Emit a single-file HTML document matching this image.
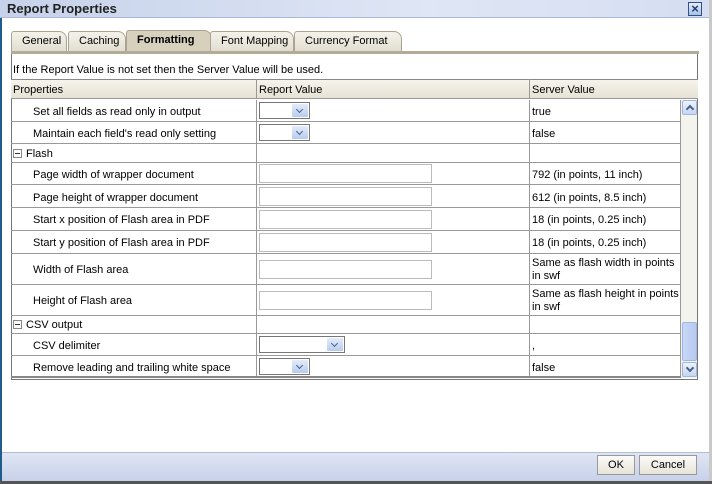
<!DOCTYPE html>
<html><head><style>
*{box-sizing:border-box;margin:0;padding:0}
body{width:712px;height:484px;overflow:hidden;background:#fff;font-family:"Liberation Sans",sans-serif;font-size:11px;color:#000;position:relative}
.a{position:absolute}
.t{white-space:nowrap}
.tab{position:absolute;top:31px;height:20px;background:linear-gradient(#f4f2ea,#e2ded0);border:1px solid #a8a491;border-bottom:none;border-radius:3px 8px 0 0;padding:3px 0 0 10px;font-size:11px}
.row{position:absolute;left:11px;width:670px;border-bottom:1px solid #999}
.row span{margin-top:1px}
.sel{position:absolute;height:17px;border:1px solid #777;background:#fff}
.sel i{position:absolute;right:1px;top:1px;width:16px;height:13px;background:linear-gradient(#e4ecfa,#b8cbee);border-radius:1px}
.sel i:after{content:"";position:absolute;left:5px;top:3px;width:4px;height:4px;border-right:1.5px solid #4a5f88;border-bottom:1.5px solid #4a5f88;transform:rotate(45deg)}
.inp{position:absolute;height:19px;border:1px solid #bbb;background:#fff}
.pm{display:inline-block;width:9px;height:9px;border:1px solid #888;position:relative;vertical-align:-1px;margin-right:4px}
.pm:after{content:"";position:absolute;left:1px;top:3px;width:5px;height:1px;background:#333}
.sb{position:absolute;left:682px;width:15px;height:15px;border:1px solid #9fb6e0;background:linear-gradient(#eef3fc,#c4d5f2);border-radius:2px}
.sb:after{content:"";position:absolute;left:4px;width:4px;height:4px;border-right:2px solid #4a5f88;border-bottom:2px solid #4a5f88}
.up:after{top:5px;transform:rotate(-135deg)}
.dn:after{top:2px;transform:rotate(45deg)}
</style></head><body>
<div class="a" style="left:0;top:0;width:712px;height:18px;background:linear-gradient(90deg,#c6d2ea,#dfe6f5 60%,#d5def2);border-bottom:1px solid #a9b8d8"></div>
<div class="a t" style="left:7px;top:1px;font-weight:bold;font-size:13px;color:#222">Report Properties</div>
<div class="a" style="left:688px;top:2px;width:14px;height:14px;border:1px solid #2f4f86;background:linear-gradient(#e7eefa,#a9bfe5);color:#1b3d74;font-size:13px;font-weight:bold;line-height:11px;text-align:center">×</div>
<div class="a" style="left:0;top:18px;width:2px;height:466px;background:#1f5c8c"></div>
<div class="a" style="left:709px;top:0;width:3px;height:484px;background:#c9c9c9"></div>

<div class="tab t" style="left:11px;width:56px">General</div>
<div class="tab t" style="left:68px;width:58px">Caching</div>
<div class="tab t" style="left:126px;width:86px;background:#d6d0bc;font-weight:bold;top:30px;height:22px">Formatting</div>
<div class="tab t" style="left:210px;width:84px">Font Mapping</div>
<div class="tab t" style="left:294px;width:108px">Currency Format</div>
<div class="a" style="left:11px;top:51px;width:688px;height:3px;background:#b1ab97"></div>

<div class="a" style="left:11px;top:54px;width:687px;height:326px;border:1px solid #777;border-top:none"></div>
<div class="a t" style="left:13px;top:64px">If the Report Value is not set then the Server Value will be used.</div>
<div class="a" style="left:11px;top:79px;width:687px;height:20px;background:linear-gradient(#f6f4ec,#e6e2d4);border-top:1px solid #888;border-bottom:1px solid #999"></div>
<div class="a t" style="left:13px;top:84px">Properties</div>
<div class="a t" style="left:259px;top:84px">Report Value</div>
<div class="a t" style="left:532px;top:84px">Server Value</div>
<div class="a" style="left:256px;top:79px;width:1px;height:20px;background:#999"></div>
<div class="a" style="left:529px;top:79px;width:1px;height:20px;background:#999"></div>

<div class="a" style="left:256px;top:100px;width:1px;height:278px;background:#999"></div>
<div class="a" style="left:529px;top:100px;width:1px;height:278px;background:#999"></div>
<div class="a" style="left:680px;top:100px;width:1px;height:278px;background:#999"></div>

<div class="row" style="top:100px;height:22px"><span class="a t" style="left:22px;top:5px">Set all fields as read only in output</span><span class="a t" style="left:521px;top:5px">true</span></div>
<div class="sel" style="left:259px;top:102px;width:51px"><i></i></div>
<div class="row" style="top:122px;height:22px"><span class="a t" style="left:22px;top:5px">Maintain each field's read only setting</span><span class="a t" style="left:521px;top:5px">false</span></div>
<div class="sel" style="left:259px;top:124px;width:51px"><i></i></div>
<div class="row" style="top:144px;height:19px"><span class="a t" style="left:2px;top:3px"><span class="pm"></span>Flash</span></div>
<div class="row" style="top:163px;height:22px"><span class="a t" style="left:22px;top:5px">Page width of wrapper document</span><span class="a t" style="left:521px;top:5px">792 (in points, 11 inch)</span></div>
<div class="inp" style="left:259px;top:164px;width:173px"></div>
<div class="row" style="top:185px;height:23px"><span class="a t" style="left:22px;top:6px">Page height of wrapper document</span><span class="a t" style="left:521px;top:6px">612 (in points, 8.5 inch)</span></div>
<div class="inp" style="left:259px;top:187px;width:173px"></div>
<div class="row" style="top:208px;height:23px"><span class="a t" style="left:22px;top:5px">Start x position of Flash area in PDF</span><span class="a t" style="left:521px;top:5px">18 (in points, 0.25 inch)</span></div>
<div class="inp" style="left:259px;top:210px;width:173px"></div>
<div class="row" style="top:231px;height:23px"><span class="a t" style="left:22px;top:5px">Start y position of Flash area in PDF</span><span class="a t" style="left:521px;top:5px">18 (in points, 0.25 inch)</span></div>
<div class="inp" style="left:259px;top:233px;width:173px"></div>
<div class="row" style="top:254px;height:31px"><span class="a t" style="left:22px;top:9px">Width of Flash area</span><span class="a" style="left:521px;top:2px;width:150px;line-height:13px">Same as flash width in points in swf</span></div>
<div class="inp" style="left:259px;top:260px;width:173px"></div>
<div class="row" style="top:285px;height:31px"><span class="a t" style="left:22px;top:9px">Height of Flash area</span><span class="a" style="left:521px;top:2px;width:150px;line-height:13px">Same as flash height in points in swf</span></div>
<div class="inp" style="left:259px;top:291px;width:173px"></div>
<div class="row" style="top:316px;height:18px"><span class="a t" style="left:2px;top:2px"><span class="pm"></span>CSV output</span></div>
<div class="row" style="top:334px;height:22px"><span class="a t" style="left:22px;top:5px">CSV delimiter</span><span class="a t" style="left:521px;top:5px">,</span></div>
<div class="sel" style="left:259px;top:336px;width:86px"><i></i></div>
<div class="row" style="top:356px;height:22px;border-bottom:2px solid #888"><span class="a t" style="left:22px;top:5px">Remove leading and trailing white space</span><span class="a t" style="left:521px;top:5px">false</span></div>
<div class="sel" style="left:259px;top:358px;width:51px"><i></i></div>

<div class="a" style="left:681px;top:100px;width:16px;height:278px;background:#f4f4ef"></div>
<div class="sb up" style="top:100px"></div>
<div class="a" style="left:682px;top:322px;width:15px;height:39px;border:1px solid #9fb6e0;background:linear-gradient(90deg,#c8d8f6,#b6caf0);border-radius:2px"></div>
<div class="sb dn" style="top:362px"></div>

<div class="a" style="left:2px;top:452px;width:707px;height:29px;background:linear-gradient(#dfe5f4,#c7d1ea);border-top:1px solid #b0bcd8"></div>
<div class="a" style="left:0;top:481px;width:712px;height:3px;background:#555"></div>
<div class="a" style="left:597px;top:455px;width:38px;height:20px;border:1px solid #999;background:linear-gradient(#fbfbf8,#e6e3d8);text-align:center;line-height:18px">OK</div>
<div class="a" style="left:639px;top:455px;width:58px;height:20px;border:1px solid #999;background:linear-gradient(#fbfbf8,#e6e3d8);text-align:center;line-height:18px">Cancel</div>
</body></html>
